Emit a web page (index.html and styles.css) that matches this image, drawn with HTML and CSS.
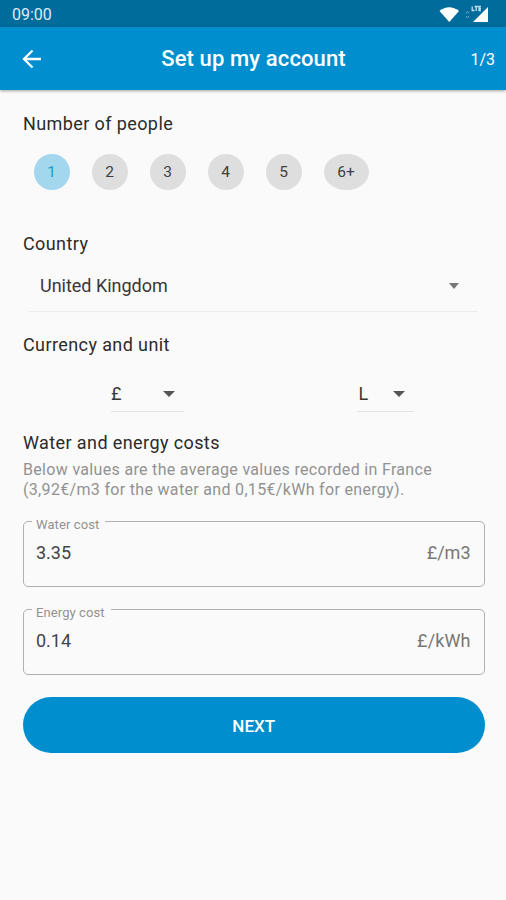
FILE: index.html
```html
<!DOCTYPE html>
<html lang="en">
<head>
<meta charset="utf-8">
<title>Set up my account</title>
<link rel="stylesheet" href="styles.css">
</head>
<body>
<div class="status">
  <span class="time">09:00</span>
  <svg class="status-icons" width="52" height="20" viewBox="0 0 52 20">
    <path d="M0.500 7Q10 -0.500 20 7L10.300 18Z" fill="#fff"/>
    <path d="M27 9.500L28.500 7.500L30 9.500M27 12L28.500 14L30 12" fill="none" stroke="#6fa9c6" stroke-width="1"/>
    <path d="M49 3V18H34Z" fill="#fff"/>
    <path d="M33.200 2.500V6.500H35.500M35.500 2.500H39M37.200 2.500V7M42 2.500H40V6.500H42M40 4.500H42" fill="none" stroke="#c5e0ed" stroke-width="1.300"/>
  </svg>
</div>
<header class="bar">
  <svg class="back" width="20" height="20" viewBox="0 0 20 20"><path d="M10.500 1.500L2 10L10.500 18.500M2 10H19" fill="none" stroke="#fff" stroke-width="2.300"/></svg>
  <h1 class="title">Set up my account</h1>
  <span class="step">1/3</span>
</header>
<main class="form">
  <h2 class="heading">Number of people</h2>
  <div class="chips">
    <button class="chip selected">1</button>
    <button class="chip">2</button>
    <button class="chip">3</button>
    <button class="chip">4</button>
    <button class="chip">5</button>
    <button class="chip wide">6+</button>
  </div>
  <h2 class="heading">Country</h2>
  <div class="select country"><span class="country-name">United Kingdom</span><i class="caret muted"></i></div>
  <h2 class="heading">Currency and unit</h2>
  <div class="units">
    <div class="select currency"><span>£</span><i class="caret"></i></div>
    <div class="select unit"><span>L</span><i class="caret"></i></div>
  </div>
  <h2 class="heading costs">Water and energy costs</h2>
  <p class="hint">Below values are the average values recorded in France<br>(3,92€/m3 for the water and 0,15€/kWh for energy).</p>
  <fieldset class="field">
    <legend class="label water">Water cost</legend>
    <div class="row"><span class="value">3.35</span><span class="suffix">£/m3</span></div>
  </fieldset>
  <fieldset class="field">
    <legend class="label energy">Energy cost</legend>
    <div class="row"><span class="value">0.14</span><span class="suffix kwh">£/kWh</span></div>
  </fieldset>
  <button class="next">NEXT</button>
</main>
</body>
</html>
```
FILE: styles.css
```css
* { box-sizing: border-box; }
body {
  margin: 0;
  min-height: 900px;
  background: #fafafa;
  color: #2b2b2b;
  font-family: Roboto, sans-serif;
}
.status {
  height: 27px;
  padding: 0 13px 0 12px;
  display: flex;
  justify-content: space-between;
  align-items: center;
  background: #006c9c;
  color: #d9edf6;
}
.time { font-size: 16px; line-height: 27px; padding-top: 1px; }
.status-icons { margin: 1px 2px 0 0; }
.bar {
  height: 63px;
  padding: 0 11px 0 22px;
  display: grid;
  grid-template-columns: 60px 1fr 60px;
  align-items: center;
  background: #008ecf;
  color: #fff;
  box-shadow: 0 1px 3px rgba(0, 0, 0, .35);
}
.title { margin: 0; padding-right: 10px; font-size: 22px; font-weight: 500; letter-spacing: .12px; text-align: center; line-height: 64px; white-space: nowrap; }
.step { font-size: 16px; text-align: right; }
.form { padding: 22px 21.5px 0 23px; }
.heading { margin: 0; height: 24px; line-height: 24px; font-size: 18px; font-weight: 400; letter-spacing: .4px; white-space: nowrap; }
.chips { display: flex; gap: 22px; height: 96px; padding: 18px 0 0 10.500px; }
.chip {
  width: 36px;
  height: 36px;
  padding: 0;
  border: 0;
  border-radius: 18px;
  background: #dedede;
  color: #404040;
  font: 15.500px/37px Roboto, sans-serif;
}
.selected { background: #a2d7ee; color: #2399cd; }
.wide { width: 45px; border-radius: 22px / 18px; }
.select { display: flex; justify-content: space-between; align-items: center; border-bottom: 1px solid #e2e2e2; font-size: 18px; color: #383838; }
.country { height: 56px; margin: 0 7px 21px 5px; padding: 4px 19px 0 12px; border-color: #ededed; }
.country-name { letter-spacing: -.02px; }
.caret { border: 6px solid transparent; border-top: 6px solid #555; border-bottom: 0; }
.muted { border-top-color: #777; border-width: 6px 5.500px 0; }
.units { display: flex; height: 74px; padding: 19px 71px 0 88px; justify-content: space-between; }
.select.currency, .select.unit { height: 36px; }
.currency { width: 73px; padding: 0 9px 0 0; }
.unit { width: 57px; padding: 0 9px 0 2px; }
.hint { margin: 5px 0 14px; color: #929292; font-size: 16px; line-height: 20px; letter-spacing: .32px; white-space: nowrap; }
.field { height: 73px; min-width: 0; margin: 0 0 15px; padding: 0 13px 0 8px; border: 1px solid #b0b0b0; border-radius: 5px; }
.label { height: 14px; padding: 5px 6px 0 4px; line-height: 12px; font-size: 13px; letter-spacing: .1px; color: #929292; white-space: nowrap; }
.row { display: flex; justify-content: space-between; padding: 11px 0 0 4px; font-size: 18px; line-height: 28px; }
.value { color: #444; }
.suffix { color: #777; }
.kwh { letter-spacing: .1px; }
.next { display: block; width: 100%; height: 56px; margin-top: 22px; border: 0; border-radius: 28px; background: #008ecf; color: #fff; font: 500 17px/56px Roboto, sans-serif; }
```
